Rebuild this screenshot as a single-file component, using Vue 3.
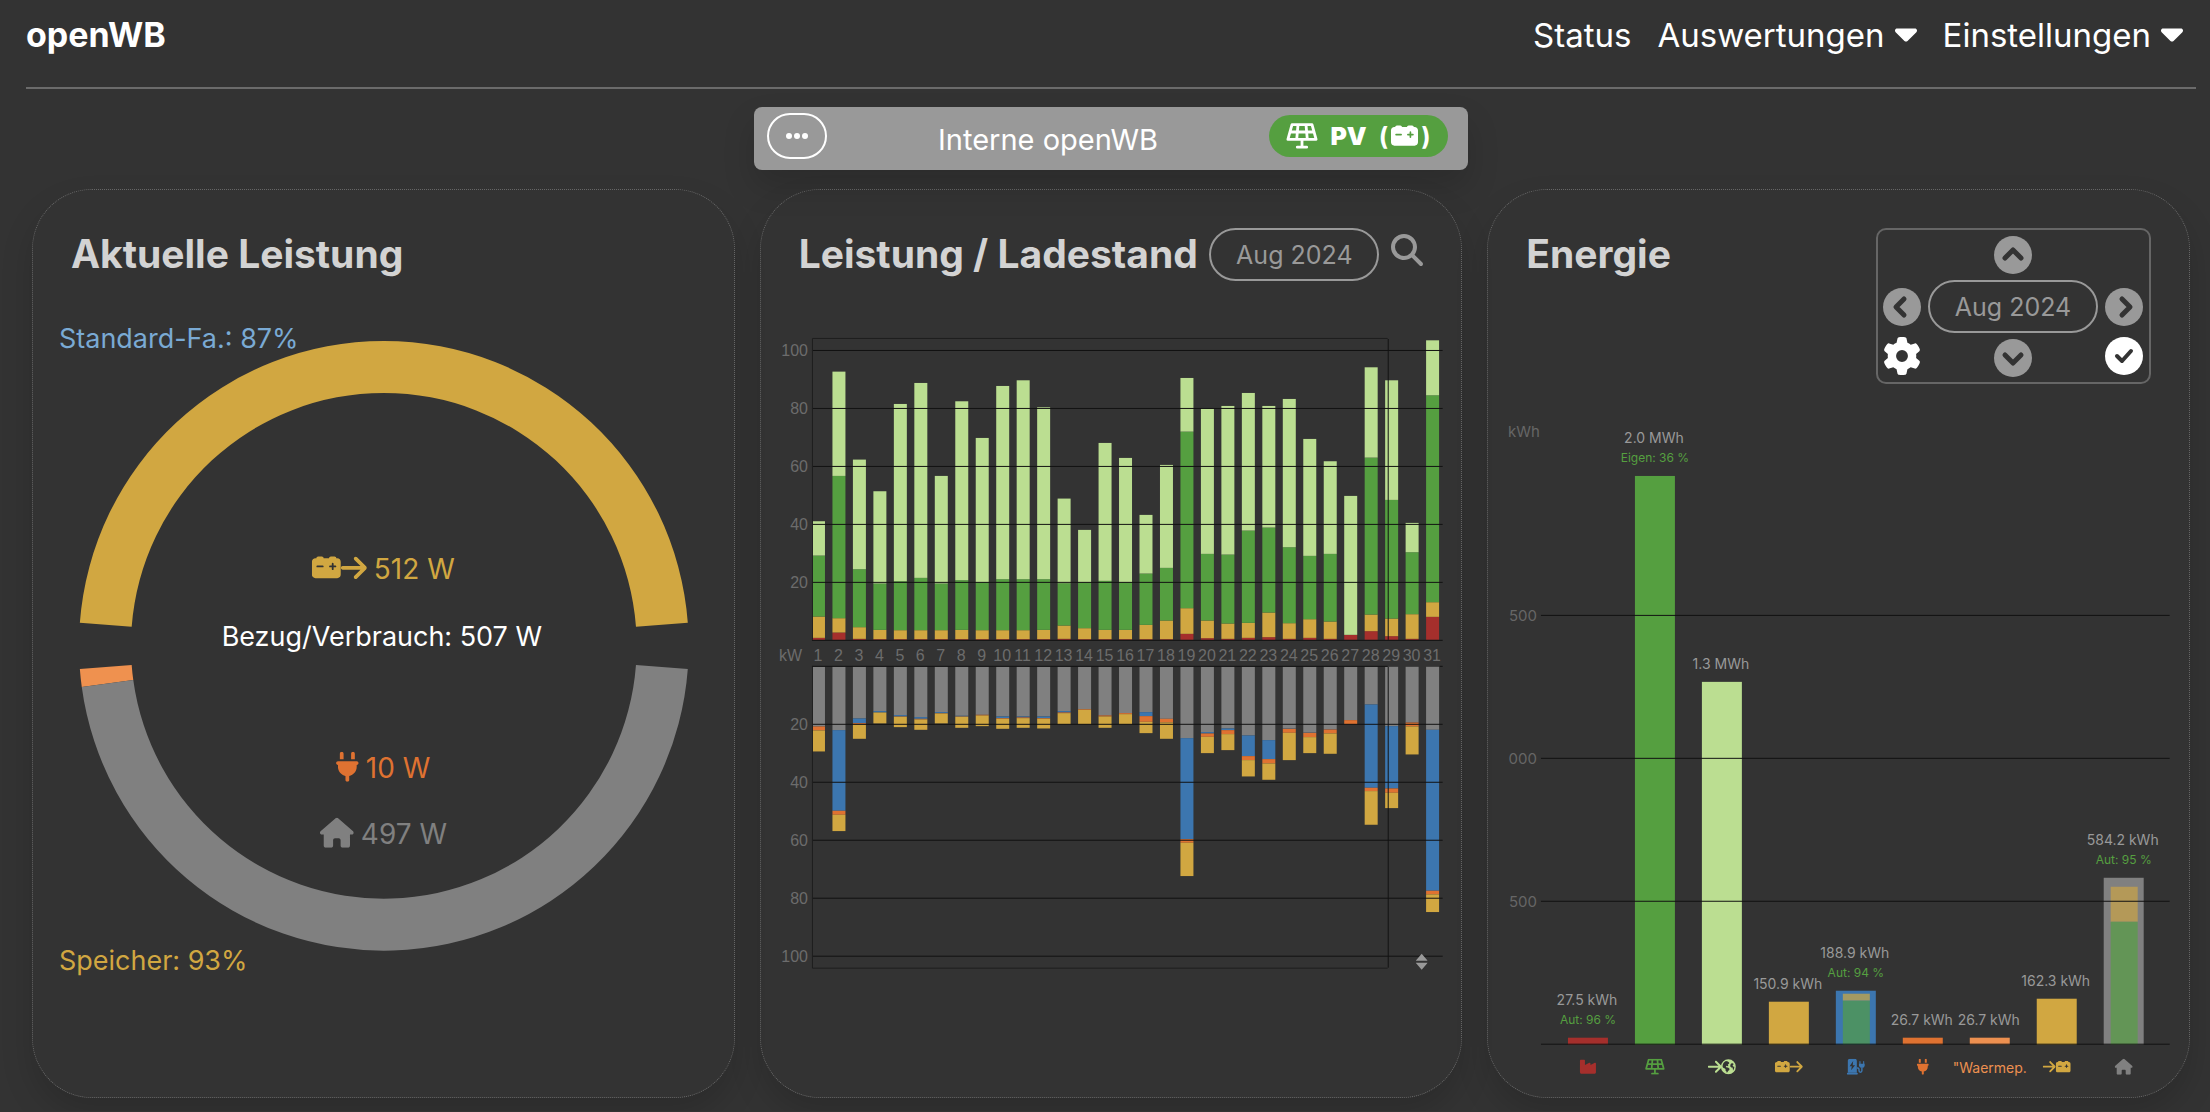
<script setup>
const BAR_STEP = 20.48
const BAR_WIDTH = 13
const PLOT_LEFT = 812

// Cumulative levels per day, 8.7 steps per kWh: grid, battery, self-used PV, export
const sources = [
  [6, 70, 253, 356], [22, 65, 492, 805], [3, 38, 212, 541], [2, 30, 169, 446],
  [2, 29, 176, 708], [2, 29, 186, 771], [2, 29, 169, 492], [2, 30, 179, 716],
  [2, 29, 173, 606], [2, 29, 182, 762], [2, 29, 182, 779], [2, 30, 182, 698],
  [3, 43, 170, 424], [2, 35, 173, 330], [2, 30, 177, 591], [2, 30, 173, 546],
  [2, 45, 199, 375], [2, 58, 216, 525], [18, 95, 625, 786], [5, 58, 258, 694],
  [3, 49, 256, 702], [6, 51, 328, 741], [8, 82, 337, 702], [3, 50, 278, 723],
  [6, 62, 252, 603], [3, 55, 258, 536], [15, 15, 15, 432], [26, 76, 547, 818],
  [11, 64, 420, 779], [3, 77, 263, 351], [69, 113, 734, 899]
]

// Cumulative levels per day: house, charging, devices, battery
const usage = [
  [179, 179, 191, 254], [190, 432, 444, 493], [155, 169, 173, 216], [133, 137, 137, 170],
  [145, 149, 150, 181], [151, 156, 158, 189], [136, 139, 140, 170], [147, 149, 150, 183],
  [144, 144, 146, 178], [149, 154, 156, 186], [149, 152, 154, 183], [149, 154, 156, 185],
  [133, 137, 139, 172], [127, 127, 129, 172], [146, 146, 149, 183], [139, 139, 142, 172],
  [136, 148, 165, 199], [156, 156, 167, 216], [214, 517, 528, 628], [196, 200, 210, 259],
  [185, 190, 202, 250], [206, 268, 280, 329], [220, 277, 290, 339], [185, 186, 198, 280],
  [197, 198, 211, 259], [187, 188, 200, 261], [160, 160, 172, 172], [113, 363, 373, 474],
  [178, 365, 378, 424], [166, 167, 179, 263], [189, 672, 683, 736]
]

const sourceColors = ['#a52f2c', '#d1a741', '#559f40', '#bbde91']
const usageColors = ['#808080', '#3c76af', '#df7231', '#d1a741']

function stack(rows, colors, base, direction) {
  const out = []
  rows.forEach((levels, day) => {
    let from = 0
    levels.forEach((level, i) => {
      const h = (level - from) / 3
      if (h > 0) {
        out.push({
          x: PLOT_LEFT + day * BAR_STEP,
          y: direction < 0 ? base - level / 3 : base + from / 3,
          h,
          fill: colors[i]
        })
      }
      from = level
    })
  })
  return out
}

const upperBars = stack(sources, sourceColors, 639, -1)
const lowerBars = stack(usage, usageColors, 666, 1)
const ticks = [20, 40, 60, 80, 100]

const energy = [
  { top: 1037, value: '27.5 kWh', share: 'Aut: 96 %', color: '#a52f2c', icons: [['industry', -9, 18]] },
  { top: 475, value: '2.0 MWh', share: 'Eigen: 36 %', color: '#559f40', icons: [['solar', -10, 20]] },
  { top: 681, value: '1.3 MWh', color: '#bbde91', icons: [['arrow', -14, 14], ['globe', -1, 15]] },
  { top: 1001, value: '150.9 kWh', color: '#d1a741', icons: [['battery', -14, 15], ['arrow', 1, 13]] },
  { top: 990, value: '188.9 kWh', share: 'Aut: 94 %', color: '#3c76af', icons: [['station', -9, 18]],
    inner: [993, 1000], innerColors: ['#a39a62', '#4c9165'] },
  { top: 1037, value: '26.7 kWh', color: '#df7231', icons: [['plug', -6, 12]] },
  { top: 1037, value: '26.7 kWh', color: '#ed9050', label: '"Waermep.' },
  { top: 998, value: '162.3 kWh', color: '#d1a741', icons: [['arrow', -14, 13], ['battery', -1, 15]] },
  { top: 877, value: '584.2 kWh', share: 'Aut: 95 %', color: '#808080', icons: [['house', -9, 18]],
    inner: [886, 921], innerColors: ['#b49958', '#639556'] }
].map((e, i) => ({ ...e, x: 1588 + i * 67 }))

function arc(from, to) {
  const cx = 384, cy = 645, R = 305, r = 253
  const p = (rad, a) => `${cx + rad * Math.cos(a)} ${cy - rad * Math.sin(a)}`
  const large = Math.abs(to - from) > Math.PI ? 1 : 0
  return `M${p(R, from)}A${R} ${R} 0 ${large} 0 ${p(R, to)}L${p(r, to)}A${r} ${r} 0 ${large} 1 ${p(r, from)}Z`
}
const gap = 0.0758
const arcs = [
  { d: arc(gap, Math.PI - gap), fill: '#d1a741' },
  { d: arc(Math.PI + gap, Math.PI + 0.1355), fill: '#ef914f' },
  { d: arc(Math.PI + 0.1355, 2 * Math.PI - gap), fill: '#808080' }
]
</script>

<template>
  <div class="page">
    <svg class="defs" aria-hidden="true">
      <symbol id="battery" viewBox="0 0 512 512"><path d="M80 96c0-17.7 14.3-32 32-32h64c17.7 0 32 14.3 32 32l96 0c0-17.7 14.3-32 32-32h64c17.7 0 32 14.3 32 32h16c35.3 0 64 28.7 64 64V384c0 35.3-28.7 64-64 64H64c-35.3 0-64-28.7-64-64V160c0-35.3 28.7-64 64-64l16 0zm304 96c0-8.8-7.2-16-16-16s-16 7.2-16 16v32H320c-8.8 0-16 7.2-16 16s7.2 16 16 16h32v32c0 8.8 7.2 16 16 16s16-7.2 16-16V256h32c8.8 0 16-7.2 16-16s-7.2-16-16-16H384V192zM80 240c0 8.8 7.2 16 16 16h96c8.8 0 16-7.2 16-16s-7.2-16-16-16H96c-8.8 0-16 7.2-16 16z" /></symbol>
      <symbol id="arrow" viewBox="0 0 448 512"><path d="M438.6 278.6c12.5-12.5 12.5-32.8 0-45.3l-160-160c-12.5-12.5-32.8-12.5-45.3 0s-12.5 32.8 0 45.3L338.8 224 32 224c-17.7 0-32 14.3-32 32s14.3 32 32 32l306.7 0L233.4 393.4c-12.5 12.5-12.5 32.8 0 45.3s32.8 12.5 45.3 0l160-160z" /></symbol>
      <symbol id="plug" viewBox="0 0 384 512"><path d="M96 0C78.3 0 64 14.3 64 32v96h64V32c0-17.7-14.3-32-32-32zM288 0c-17.7 0-32 14.3-32 32v96h64V32c0-17.7-14.3-32-32-32zM32 160c-17.7 0-32 14.3-32 32s14.3 32 32 32v32c0 77.4 55 142 128 156.8V480c0 17.7 14.3 32 32 32s32-14.3 32-32V412.8C297 398 352 333.4 352 256V224c17.7 0 32-14.3 32-32s-14.3-32-32-32H32z" /></symbol>
      <symbol id="house" viewBox="0 0 576 512"><path d="M575.8 255.5c0 18-15 32.1-32 32.1h-32l.7 160.2c0 2.7-.2 5.4-.5 8.1V472c0 22.1-17.9 40-40 40H456c-1.1 0-2.2 0-3.3-.1c-1.4 .1-2.8 .1-4.2 .1H416 392c-22.1 0-40-17.9-40-40V448 384c0-17.7-14.3-32-32-32H256c-17.7 0-32 14.3-32 32v64 24c0 22.1-17.9 40-40 40H160 128.1c-1.5 0-3-.1-4.5-.2c-1.2 .1-2.4 .2-3.6 .2H104c-22.1 0-40-17.9-40-40V360c0-.9 0-1.9 .1-2.8V287.6H32c-18 0-32-14-32-32.1c0-9 3-17 10-24L266.4 8c7-7 15-8 22-8s15 2 21 7L564.8 231.5c8 7 12 15 11 24z" /></symbol>
      <symbol id="search" viewBox="0 0 512 512"><path d="M416 208c0 45.9-14.9 88.3-40 122.7L502.6 457.4c12.5 12.5 12.5 32.8 0 45.3s-32.8 12.5-45.3 0L330.7 376c-34.4 25.2-76.8 40-122.7 40C93.1 416 0 322.9 0 208S93.1 0 208 0S416 93.1 416 208zM208 352a144 144 0 1 0 0-288 144 144 0 1 0 0 288z" /></symbol>
      <symbol id="caret" viewBox="0 192 320 192"><path d="M137.4 374.6c12.5 12.5 32.8 12.5 45.3 0l128-128c9.2-9.2 11.9-22.9 6.9-34.9s-16.6-19.8-29.6-19.8L32 192c-12.9 0-24.6 7.8-29.6 19.8s-2.2 25.7 6.9 34.9l128 128z" /></symbol>
      <symbol id="gear" viewBox="0 0 512 512"><path d="M495.9 166.6c3.2 8.7 .5 18.4-6.4 24.6l-43.3 39.4c1.1 8.3 1.7 16.8 1.7 25.4s-.6 17.1-1.7 25.4l43.3 39.4c6.9 6.2 9.6 15.9 6.4 24.6c-4.4 11.9-9.7 23.3-15.8 34.3l-4.7 8.1c-6.6 11-14 21.4-22.1 31.2c-5.9 7.2-15.7 9.6-24.5 6.8l-55.7-17.7c-13.4 10.3-28.2 18.9-44 25.4l-12.5 57.1c-2 9.1-9 16.3-18.2 17.8c-13.8 2.3-28 3.5-42.5 3.5s-28.7-1.2-42.5-3.5c-9.2-1.5-16.2-8.7-18.2-17.8l-12.5-57.1c-15.8-6.5-30.6-15.1-44-25.4L83.1 425.9c-8.8 2.8-18.6 .3-24.5-6.8c-8.1-9.8-15.5-20.2-22.1-31.2l-4.7-8.1c-6.1-11-11.4-22.4-15.8-34.3c-3.2-8.7-.5-18.4 6.4-24.6l43.3-39.4C64.6 273.1 64 264.6 64 256s.6-17.1 1.7-25.4L22.4 191.2c-6.9-6.2-9.6-15.9-6.4-24.6c4.4-11.9 9.7-23.3 15.8-34.3l4.7-8.1c6.6-11 14-21.4 22.1-31.2c5.9-7.2 15.7-9.6 24.5-6.8l55.7 17.7c13.4-10.3 28.2-18.9 44-25.4l12.5-57.1c2-9.1 9-16.3 18.2-17.8C227.3 1.2 241.5 0 256 0s28.7 1.2 42.5 3.5c9.2 1.5 16.2 8.7 18.2 17.8l12.5 57.1c15.8 6.5 30.6 15.1 44 25.4l55.7-17.7c8.8-2.8 18.6-.3 24.5 6.8c8.1 9.8 15.5 20.2 22.1 31.2l4.7 8.1c6.1 11 11.4 22.4 15.8 34.3zM256 336a80 80 0 1 0 0-160 80 80 0 1 0 0 160z" /></symbol>
      <symbol id="solar" viewBox="0 0 640 512"><path d="M120 28H520L602 324H38ZM79 176H561M240 28L214 324M400 28L426 324M320 324V480M226 480H414" fill="none" stroke="currentColor" stroke-width="56" stroke-linejoin="round" stroke-linecap="round" /></symbol>
      <symbol id="industry" viewBox="0 0 576 512"><path d="M64 32C46 32 32 46 32 64V432c0 26 21 48 48 48H496c27 0 48-22 48-48V152c0-18-19-30-35-21L368 206V152c0-18-19-30-35-21L192 206V64c0-18-14-32-32-32Z" /></symbol>
      <symbol id="globe" viewBox="0 0 512 512"><path fill-rule="evenodd" d="M512 256A256 256 0 1 1 0 256a256 256 0 1 1 512 0ZM58 270L90 302L138 314L160 344V392L192 424V455H214L252 394L290 366V322L240 288L196 284L168 252L196 224L236 238L254 210L232 188L282 144V112L238 82L172 62C94 96 52 170 58 270ZM346 150L322 196V252L352 286H398L412 350V394C442 362 460 310 458 262L414 252L400 206L436 174L412 138Z" /></symbol>
      <symbol id="station" viewBox="0 0 576 512"><path fill-rule="evenodd" d="M96 0H256C291 0 320 29 320 64V448H32V64C32 29 61 0 96 0ZM204 78L88 246H160L136 374L264 208H188Z" /><rect y="448" width="352" height="64" rx="30" /><path d="M320 300H348C380 300 390 320 390 346V390C390 450 482 450 482 390V280" fill="none" stroke="currentColor" stroke-width="46" /><path d="M420 96V160M540 96V160" stroke="currentColor" stroke-width="36" stroke-linecap="round" /><path d="M388 160H576V208C576 252 544 288 482 294C424 288 388 252 388 208Z" /></symbol>
      <symbol id="sort" viewBox="0 0 12 18"><path d="M6 1L12 8H0ZM6 17L0 10H12Z" /></symbol>
      <symbol id="dots" viewBox="0 0 22 6"><circle cx="3" cy="3" r="3" /><circle cx="11" cy="3" r="3" /><circle cx="19" cy="3" r="3" /></symbol>
    </svg>

    <header class="topbar">
      <a class="brand" href="#">openWB</a>
      <nav class="nav">
        <a href="#status">Status</a>
        <button type="button">Auswertungen<svg class="caret"><use href="#caret" /></svg></button>
        <button type="button">Einstellungen<svg class="caret"><use href="#caret" /></svg></button>
      </nav>
    </header>

    <section class="chargepoint">
      <button type="button" class="more" aria-label="Mehr"><svg class="dots"><use href="#dots" /></svg></button>
      <span class="cp-name">Interne openWB</span>
      <span class="mode">
        <svg class="mode-solar"><use href="#solar" /></svg>
        <b>PV</b>
        <span class="paren">(<svg class="mode-battery"><use href="#battery" /></svg>)</span>
      </span>
    </section>

    <main class="cards">
      <article class="card">
        <div class="card-head"><h2>Aktuelle Leistung</h2></div>
        <svg class="chart power" viewBox="33 300 701 700" role="img" aria-label="Aktuelle Leistung">
          <path v-for="a in arcs" :key="a.d" :d="a.d" :fill="a.fill" />
          <text x="59" y="347" fill="#7aaad4">Standard-Fa.: 87%</text>
          <text x="59" y="969" fill="#d1a741">Speicher: 93%</text>
          <g class="gold">
            <use href="#battery" x="312" y="552" width="29" height="29" />
            <use href="#arrow" x="341" y="552" width="26" height="30" />
            <text x="374" y="578">512 W</text>
          </g>
          <text x="382" y="645" fill="#fff" text-anchor="middle">Bezug/Verbrauch: 507 W</text>
          <g class="orange">
            <use href="#plug" x="336" y="751" width="23" height="30" />
            <text x="366" y="777">10 W</text>
          </g>
          <g class="grey">
            <use href="#house" x="320" y="817" width="34" height="30" />
            <text x="361" y="843">497 W</text>
          </g>
        </svg>
      </article>

      <article class="card">
        <div class="card-head">
          <h2>Leistung / Ladestand</h2>
          <div class="tools">
            <button type="button" class="month">Aug 2024</button>
            <button type="button" class="plain" aria-label="Zoom"><svg class="search"><use href="#search" /></svg></button>
          </div>
        </div>
        <svg class="chart daily" viewBox="761 300 701 700" role="img" aria-label="Leistung und Ladestand pro Tag">
          <rect v-for="(b, i) in upperBars" :key="'u' + i" :x="b.x" :y="b.y" :width="BAR_WIDTH" :height="b.h" :fill="b.fill" />
          <rect v-for="(b, i) in lowerBars" :key="'l' + i" :x="b.x" :y="b.y" :width="BAR_WIDTH" :height="b.h" :fill="b.fill" />
          <g v-for="t in ticks" :key="t">
            <path class="rule" :d="`M812 ${639.5 - t * 2.9}H1443M812 ${665.5 + t * 2.9}H1443`" />
            <text x="808" :y="645 - t * 2.9" text-anchor="end">{{ t }}</text>
            <text x="808" :y="671 + t * 2.9" text-anchor="end">{{ t }}</text>
          </g>
          <path class="rule" d="M812 639.5H1443M812 665.5H1388M1440 665.5H1443M1388.5 338V639M1388.5 666V967" />
          <path class="frame" d="M1388 337.5H812.5V639M812.5 666V967.5H1388" />
          <text x="779" y="660">kW</text>
          <text v-for="d in 31" :key="d" :x="818 + (d - 1) * BAR_STEP" y="660" text-anchor="middle">{{ d }}</text>
          <use href="#sort" x="1416" y="952" width="12" height="18" class="sort" />
        </svg>
      </article>

      <article class="card">
        <div class="card-head">
          <h2>Energie</h2>
          <div class="picker">
            <button type="button" class="plain up" aria-label="Nach oben"><svg viewBox="0 0 38 38"><circle cx="19" cy="19" r="19" /><path d="M11 22L19 14L27 22" /></svg></button>
            <button type="button" class="plain left" aria-label="Zurück"><svg viewBox="0 0 38 38"><circle cx="19" cy="19" r="19" /><path d="M21 11L13 19L21 27" /></svg></button>
            <button type="button" class="month">Aug 2024</button>
            <button type="button" class="plain right" aria-label="Vor"><svg viewBox="0 0 38 38"><circle cx="19" cy="19" r="19" /><path d="M17 11L25 19L17 27" /></svg></button>
            <button type="button" class="plain corner gear" aria-label="Einstellungen"><svg><use href="#gear" /></svg></button>
            <button type="button" class="plain down" aria-label="Nach unten"><svg viewBox="0 0 38 38"><circle cx="19" cy="19" r="19" /><path d="M11 16L19 24L27 16" /></svg></button>
            <button type="button" class="plain corner check" aria-label="Fertig"><svg viewBox="0 0 38 38"><circle cx="19" cy="19" r="19" /><path d="M12 19L17 24L26 14" /></svg></button>
          </div>
        </div>
        <svg class="chart energy" viewBox="1488 400 701 690" role="img" aria-label="Energie August 2024">
          <text class="axis" x="1508" y="436">kWh</text>
          <text class="axis" x="1537" y="620" text-anchor="end">500</text>
          <text class="axis" x="1537" y="763" text-anchor="end">000</text>
          <text class="axis" x="1537" y="906" text-anchor="end">500</text>
          <g v-for="e in energy" :key="e.x" :style="{ color: e.color }">
            <rect class="fill" :x="e.x - 20" :y="e.top" width="40" :height="1044 - e.top" />
            <template v-if="e.inner">
              <rect :x="e.x - 13" :y="e.inner[0]" width="27" :height="e.inner[1] - e.inner[0]" :fill="e.innerColors[0]" />
              <rect :x="e.x - 13" :y="e.inner[1]" width="27" :height="1044 - e.inner[1]" :fill="e.innerColors[1]" />
            </template>
            <text class="value" :x="e.x - 1" :y="e.top - (e.share ? 33 : 13)">{{ e.value }}</text>
            <text v-if="e.share" class="share" :x="e.x" :y="e.top - 14">{{ e.share }}</text>
            <text v-if="e.label" class="name" :x="e.x" y="1072">{{ e.label }}</text>
            <use v-for="ic in e.icons" :key="ic[0]" class="fill" :href="'#' + ic[0]" :x="e.x + ic[1]" y="1058" :width="ic[2]" height="16" />
          </g>
          <path class="rule" d="M1541 614.5H2170M1541 757.5H2170M1541 900.5H2170M1541 1043.5H2170" />
        </svg>
      </article>
    </main>
  </div>
</template>

<style>
body {
  background: #333;
}
</style>

<style scoped>
.page {
  color: #fff;
  font-family: Inter, "Liberation Sans", sans-serif;
  padding-bottom: 13px;
}

.defs {
  display: block;
  width: 0;
  height: 0;
}

button,
a {
  font: inherit;
  line-height: inherit;
  color: inherit;
  text-decoration: none;
  background: none;
  border: 0;
  padding: 0;
}

.topbar {
  display: flex;
  justify-content: space-between;
  align-items: flex-start;
  height: 87px;
  margin: 0 14px 0 26px;
  border-bottom: 2px solid #6b6b6b;
  line-height: 70px;
}

.brand {
  font-size: 34px;
  font-weight: 700;
}

.nav {
  display: flex;
  align-items: flex-start;
  gap: 26px;
  margin-right: 13px;
  font-size: 33px;
}

.caret {
  width: 22px;
  height: 14px;
  margin-left: 10px;
  fill: #fff;
  vertical-align: 5px;
}

.chargepoint {
  display: flex;
  align-items: center;
  justify-content: space-between;
  box-sizing: border-box;
  width: 714px;
  max-width: 100%;
  height: 63px;
  margin: 18px auto 19px;
  padding: 0 20px 0 13px;
  position: relative;
  left: 6px;
  background: #999;
  border-radius: 8px;
  box-shadow: 0 16px 32px rgba(0, 0, 0, 0.15);
}

.more {
  display: flex;
  align-items: center;
  justify-content: center;
  box-sizing: border-box;
  width: 60px;
  height: 46px;
  margin-bottom: 6px;
  border: 2px solid #fff;
  border-radius: 23px;
}

.dots {
  width: 22px;
  height: 6px;
  fill: #fff;
}

.cp-name {
  font-size: 29px;
  margin-top: 2px;
}

.mode {
  display: flex;
  align-items: center;
  justify-content: center;
  gap: 12px;
  width: 179px;
  height: 42px;
  margin-bottom: 6px;
  background: #559f40;
  border-radius: 21px;
  font-size: 25px;
  font-weight: 700;
}

.mode-solar {
  width: 32px;
  height: 26px;
  fill: #fff;
}

.paren {
  display: flex;
  align-items: center;
  gap: 3px;
}

.mode-battery {
  width: 27px;
  height: 27px;
  fill: #fff;
}

.cards {
  display: grid;
  grid-template-columns: repeat(3, minmax(0, 1fr));
  gap: 25px;
  margin: 0 20px 0 32px;
}

.card {
  border: 1px dotted #666;
  border-radius: 60px;
  padding: 38px 0 6px;
  box-shadow: 0 16px 32px rgba(0, 0, 0, 0.15);
}

.card-head {
  display: flex;
  justify-content: space-between;
  align-items: flex-start;
  min-height: 53px;
  padding: 0 38px;
}

h2 {
  margin: 0;
  color: #d3d3d3;
  font-size: 39px;
  font-weight: 700;
  line-height: 52px;
  white-space: nowrap;
}

.tools {
  display: flex;
  align-items: flex-start;
  gap: 12px;
}

.month {
  box-sizing: border-box;
  width: 170px;
  height: 53px;
  color: #999;
  border: 2px solid #999;
  border-radius: 27px;
  font-size: 25px;
}

.search {
  display: block;
  width: 32px;
  height: 32px;
  margin-top: 6px;
  fill: #999;
}

.chart {
  display: block;
  width: 100%;
  height: auto;
  margin-top: 20px;
}

.power {
  font-size: 27px;
}

.gold,
.orange,
.grey {
  font-size: 28px;
}

.gold {
  fill: #d1a741;
}

.orange {
  fill: #df7231;
}

.grey {
  fill: #808080;
}

.daily {
  font-family: "Liberation Sans", Arial, sans-serif;
  font-size: 16px;
  fill: #6c6c6c;
}

.rule {
  fill: none;
  stroke: #111;
  stroke-width: 1;
}

.frame {
  fill: none;
  stroke: #1e1e1e;
  stroke-width: 1;
}

.sort {
  fill: #999;
}

.picker {
  display: grid;
  grid-template-columns: 38px 170px 38px;
  grid-template-rows: 38px 53px 38px;
  gap: 6px 7px;
  align-items: center;
  box-sizing: border-box;
  padding: 6px 6px 5px 5px;
  border: 2px solid #666;
  border-radius: 10px;
}

.picker svg {
  display: block;
  width: 38px;
  height: 38px;
  fill: #999;
}

.picker path {
  fill: none;
  stroke: #333;
  stroke-width: 5;
  stroke-linecap: round;
  stroke-linejoin: round;
}

.up {
  grid-column: 2;
  justify-self: center;
}

.left {
  grid-column: 1;
}

.down {
  justify-self: center;
}

.corner {
  margin-bottom: 4px;
}

.picker .corner svg {
  fill: #fff;
}

.picker .check path {
  stroke-width: 4;
}

.energy {
  margin-top: 17px;
}

.axis {
  fill: #666;
  font-size: 15px;
}

.fill,
.name {
  fill: currentColor;
}

.value,
.name {
  font-size: 14px;
  text-anchor: middle;
}

.value {
  fill: #999;
}

.share {
  fill: #559f40;
  font-size: 12px;
  text-anchor: middle;
}
</style>
